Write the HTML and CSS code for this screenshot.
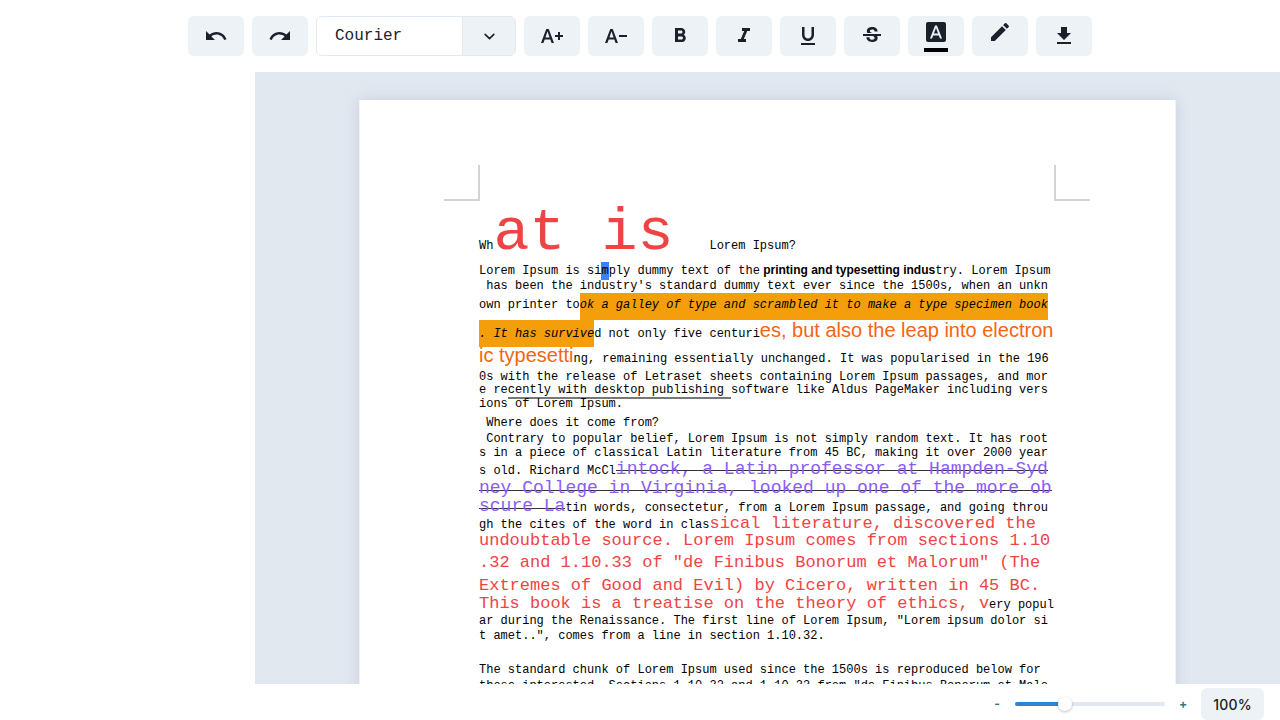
FILE: index.html
```html
<!DOCTYPE html>
<html lang="en">
<head>
<meta charset="utf-8">
<title>Document editor</title>
<link rel="stylesheet" href="styles.css">
</head>
<body>
<div class="app">
  <header class="toolbar">
    <button class="tool" aria-label="Undo"><svg viewBox="0 0 24 24"><path d="M12.5 8c-2.65 0-5.05.99-6.9 2.6L2 7v9h9l-3.62-3.62c1.39-1.16 3.16-1.88 5.12-1.88 3.54 0 6.55 2.31 7.6 5.5l2.37-.78C21.08 11.03 17.15 8 12.5 8z"/></svg></button>
    <button class="tool" aria-label="Redo"><svg viewBox="0 0 24 24"><path d="M18.4 10.6C16.55 8.99 14.15 8 11.5 8c-4.65 0-8.58 3.03-9.96 7.22L3.9 16c1.05-3.19 4.05-5.5 7.6-5.5 1.95 0 3.73.72 5.12 1.88L13 16h9V7l-3.6 3.6z"/></svg></button>
    <div class="font-select">
      <span class="font-name">Courier</span>
      <button class="font-toggle" aria-label="Choose font"><svg viewBox="0 0 12 12"><path d="M2 4l4 4 4-4"/></svg></button>
    </div>
    <button class="tool" aria-label="Increase size"><svg viewBox="0 0 24 24"><path d="M.99 19h2.42l1.27-3.58h5.65L11.59 19h2.42L8.75 5h-2.5L.99 19zm4.42-5.61L7.44 7.6h.12l2.03 5.79H5.41zM20 11h3v2h-3v3h-2v-3h-3v-2h3V8h2v3z"/></svg></button>
    <button class="tool" aria-label="Decrease size"><svg viewBox="0 0 24 24"><path d="M.99 19h2.42l1.27-3.58h5.65L11.59 19h2.42L8.75 5h-2.5L.99 19zm4.42-5.61L7.44 7.6h.12l2.03 5.79H5.41zM23 11v2h-8v-2h8z"/></svg></button>
    <button class="tool" aria-label="Bold"><svg viewBox="0 0 24 24"><path d="M15.6 10.79c.97-.67 1.65-1.77 1.65-2.79 0-2.26-1.75-4-4-4H7v14h7.04c2.09 0 3.71-1.7 3.71-3.79 0-1.52-.86-2.82-2.15-3.42zM10 6.5h3c.83 0 1.5.67 1.5 1.5s-.67 1.5-1.5 1.5h-3v-3zm3.5 9H10v-3h3.5c.83 0 1.5.67 1.5 1.5s-.67 1.5-1.5 1.5z"/></svg></button>
    <button class="tool" aria-label="Italic"><svg viewBox="0 0 24 24"><path d="M10 4v3h2.21l-3.42 8H6v3h8v-3h-2.21l3.42-8H18V4z"/></svg></button>
    <button class="tool" aria-label="Underline"><svg viewBox="0 0 24 24"><path d="M12 17c3.31 0 6-2.69 6-6V3h-2.5v8c0 1.93-1.57 3.5-3.5 3.5S8.5 12.93 8.5 11V3H6v8c0 3.31 2.69 6 6 6zm-7 2v2h14v-2H5z"/></svg></button>
    <button class="tool" aria-label="Strikethrough"><svg viewBox="0 0 24 24"><path d="M6.85 7.08C6.85 4.37 9.45 3 12.24 3c1.64 0 3 .49 3.9 1.28.77.65 1.46 1.73 1.46 3.24h-3.01c0-.31-.05-.59-.15-.85-.29-.86-1.2-1.28-2.25-1.28-1.86 0-2.34 1.02-2.34 1.7 0 .48.25.88.74 1.21.38.25.77.48 1.41.7H7.39c-.21-.34-.54-.89-.54-1.92zM21 12v-2H3v2h9.62c1.15.45 1.96.75 1.96 1.97 0 1-.81 1.67-2.28 1.67-1.54 0-2.93-.54-2.93-2.51H6.4c0 .55.08 1.13.24 1.58.81 2.29 3.29 3.3 5.67 3.3 2.27 0 5.3-.89 5.3-4.05 0-.3-.01-1.16-.48-1.94H21V12z"/></svg></button>
    <button class="tool with-swatch" aria-label="Text color"><svg viewBox="0 0 24 24"><path d="M9.93 13.5h4.14L12 7.98zM20 2H4c-1.1 0-2 .9-2 2v16c0 1.1.9 2 2 2h16c1.1 0 2-.9 2-2V4c0-1.1-.9-2-2-2zm-4.05 16.5l-1.14-3H9.17l-1.12 3H5.96l5.11-13h1.86l5.11 13h-2.09z"/></svg><span class="swatch black"></span></button>
    <button class="tool with-swatch" aria-label="Highlight color"><svg viewBox="0 0 24 24"><path d="M3 17.25V21h3.75L17.81 9.94l-3.75-3.75L3 17.25zM20.71 7.04c.39-.39.39-1.02 0-1.41l-2.34-2.34c-.39-.39-1.02-.39-1.41 0l-1.83 1.83 3.75 3.75 1.83-1.83z"/></svg><span class="swatch"></span></button>
    <button class="tool" aria-label="Download"><svg viewBox="0 0 24 24"><path d="M19 9h-4V3H9v6H5l7 7 7-7zM5 18v2h14v-2H5z"/></svg></button>
  </header>

  <main class="workspace">
    <div class="page">
      <div class="margin-marks"><span class="mark left"></span><span class="mark right"></span></div>
      <div class="text">
        <p class="line l0">Wh<span class="huge">at is </span>Lorem Ipsum?</p>
        <p class="line g20">Lorem Ipsum is si<span class="selected">m</span>ply dummy text of the<span class="heavy"> printing and typesetting indus</span>try. Lorem Ipsum</p>
        <p class="line g3"> has been the industry's standard dummy text ever since the 1500s, when an unkn</p>
        <p class="line g7">own printer to<span class="marked">ok a galley of type and scrambled it to make a type specimen book</span></p>
        <p class="line g17"><span class="marked low">. It has survive</span>d not only five centuri<span class="orange">es, but also the leap into electron</span></p>
        <p class="line g13"><span class="orange">ic typesetti</span>ng, remaining essentially unchanged. It was popularised in the 196</p>
        <p class="line g6">0s with the release of Letraset sheets containing Lorem Ipsum passages, and mor</p>
        <p class="line g1">e re<span class="under">cently with desktop publishing </span>software like Aldus PageMaker including vers</p>
        <p class="line g2">ions of Lorem Ipsum.</p>
        <p class="line g7"> Where does it come from?</p>
        <p class="line g4"> Contrary to popular belief, Lorem Ipsum is not simply random text. It has root</p>
        <p class="line g2">s in a piece of classical Latin literature from 45 BC, making it over 2000 year</p>
        <p class="line g6">s old. Richard McCl<span class="struck">intock, a Latin professor at Hampden-Syd</span></p>
        <p class="line g7"><span class="struck low">ney College in Virginia, looked up one of the more ob</span></p>
        <p class="line g6"><span class="struck low">scure La</span>tin words, consectetur, from a Lorem Ipsum passage, and going throu</p>
        <p class="line g5">gh the cites of the word in clas<span class="red">sical literature, discovered the</span></p>
        <p class="line g5"><span class="red">undoubtable source. Lorem Ipsum comes from sections 1.10</span></p>
        <p class="line g10"><span class="red">.32 and 1.10.33 of "de Finibus Bonorum et Malorum" (The</span></p>
        <p class="line g11"><span class="red">Extremes of Good and Evil) by Cicero, written in 45 BC.</span></p>
        <p class="line g6"><span class="red">This book is a treatise on the theory of ethics, v</span>ery popul</p>
        <p class="line g4">ar during the Renaissance. The first line of Lorem Ipsum, "Lorem ipsum dolor si</p>
        <p class="line g3">t amet..", comes from a line in section 1.10.32.</p>
        <p class="line g22">The standard chunk of Lorem Ipsum used since the 1500s is reproduced below for</p>
        <p class="line g4">those interested. Sections 1.10.32 and 1.10.33 from "de Finibus Bonorum et Malo</p>
      </div>
    </div>
  </main>

  <footer class="statusbar">
    <button class="step">-</button>
    <div class="slider"><div class="filled"></div><div class="thumb"></div></div>
    <button class="step">+</button>
    <button class="zoom">100%</button>
  </footer>
</div>
</body>
</html>
```
FILE: styles.css
```css
* { box-sizing: border-box; }
body { margin: 0; background: #fff; color: #1a202c; font-family: Inter, sans-serif; }
button { border: 0; padding: 0; font-family: inherit; color: inherit; background: none; }
.app { display: flex; flex-direction: column; height: 720px; overflow: hidden; }

.toolbar { flex: 0 0 72px; display: flex; justify-content: center; align-items: center; gap: 8px; }
.tool { display: flex; flex-direction: column; align-items: center; justify-content: center; width: 56px; height: 40px; border-radius: 6px; background: #edf2f7; }
.tool svg { display: block; width: 24px; height: 24px; fill: #1a202c; }
.with-swatch { gap: 4px; }
.swatch { width: 24px; height: 4px; }
.swatch.black { background: #000; }
.font-select { display: flex; width: 200px; height: 40px; border: 1px solid #e2e8f0; border-radius: 6px; overflow: hidden; }
.font-name { flex: 1; padding-left: 18px; font: 16px/38px Courier, "Courier New", "Liberation Mono", monospace; }
.font-toggle { display: flex; align-items: center; justify-content: center; width: 53px; background: #edf2f7; border-left: 1px solid #e2e8f0; }
.font-toggle svg { width: 13px; height: 13px; fill: none; stroke: #1a202c; stroke-width: 1.5; stroke-linecap: round; stroke-linejoin: round; }

.workspace { flex: 0 0 612px; margin-left: 255px; padding-top: 28px; background: #e2e8f0; overflow: hidden; }
.page { width: 817px; height: 1056px; margin-left: 104px; background: #fff; border: solid #f1f3f8; border-width: 0 1px; box-shadow: 0 0 14px rgba(100, 100, 140, .2); padding-top: 65px; }
.margin-marks { display: flex; justify-content: space-between; height: 36px; padding: 0 85px 0 84px; }
.mark { width: 36px; border-bottom: 2px solid #d3d3d3; }
.mark.left { border-right: 2px solid #d3d3d3; }
.mark.right { border-left: 2px solid #d3d3d3; }

.text { padding-left: 119px; color: #000; font: 12px/12px Courier, "Courier New", "Liberation Mono", monospace; font-variant-ligatures: none; }
.line { margin: 0; height: 12px; white-space: pre; }
.line span { line-height: 0; }
.l0 { margin-top: 32px; }
.g1 { margin-top: 1px; }
.g2 { margin-top: 2px; }
.g3 { margin-top: 3px; }
.g4 { margin-top: 4px; }
.g5 { margin-top: 5px; }
.g6 { margin-top: 6px; }
.g7 { margin-top: 7px; }
.g10 { margin-top: 10px; }
.g11 { margin-top: 11px; }
.g13 { margin-top: 13px; }
.g17 { margin-top: 17px; }
.g20 { margin-top: 20px; }
.g22 { margin-top: 22px; }
.huge { font-size: 60px; color: #ef4444; }
.selected { background: #3b82f6; padding: 2px 0; }
.heavy { font-family: Helvetica, Arial, "Liberation Sans", sans-serif; font-weight: 700; }
.marked { background: #f59e0b; font-style: italic; padding: 5px 0 8px; }
.marked.low { padding: 7px 0 6px; }
.orange { font-family: Helvetica, Arial, "Liberation Sans", sans-serif; font-size: 20px; color: #f4650f; }
.under { padding-bottom: 2px; background: linear-gradient(#777, #777) left bottom / 100% 2px no-repeat; }
.struck { font-size: 18px; color: #8b5cf6; background: linear-gradient(#333, #333) left 0 bottom 8px / 100% 1px no-repeat; }
.struck.low { background-position: left 0 bottom 7px; }
.red { font-size: 17px; color: #ef4444; }

.statusbar { flex: 0 0 36px; display: flex; align-items: center; justify-content: flex-end; padding: 4px 16px 0 0; }
.step { width: 36px; font-size: 12px; font-weight: 700; line-height: 16px; color: #2c7a7b; }
.slider { position: relative; width: 150px; height: 4px; border-radius: 2px; background: #e2e8f0; }
.filled { width: 50px; height: 4px; border-radius: 2px; background: #3182ce; }
.thumb { position: absolute; left: 43px; top: -5px; width: 14px; height: 14px; border-radius: 50%; background: #fff; box-shadow: 0 1px 3px rgba(0, 0, 0, .25); }
.zoom { width: 63px; height: 32px; border-radius: 6px; background: #edf2f7; font-size: 14px; font-weight: 500; letter-spacing: .2px; }
```
